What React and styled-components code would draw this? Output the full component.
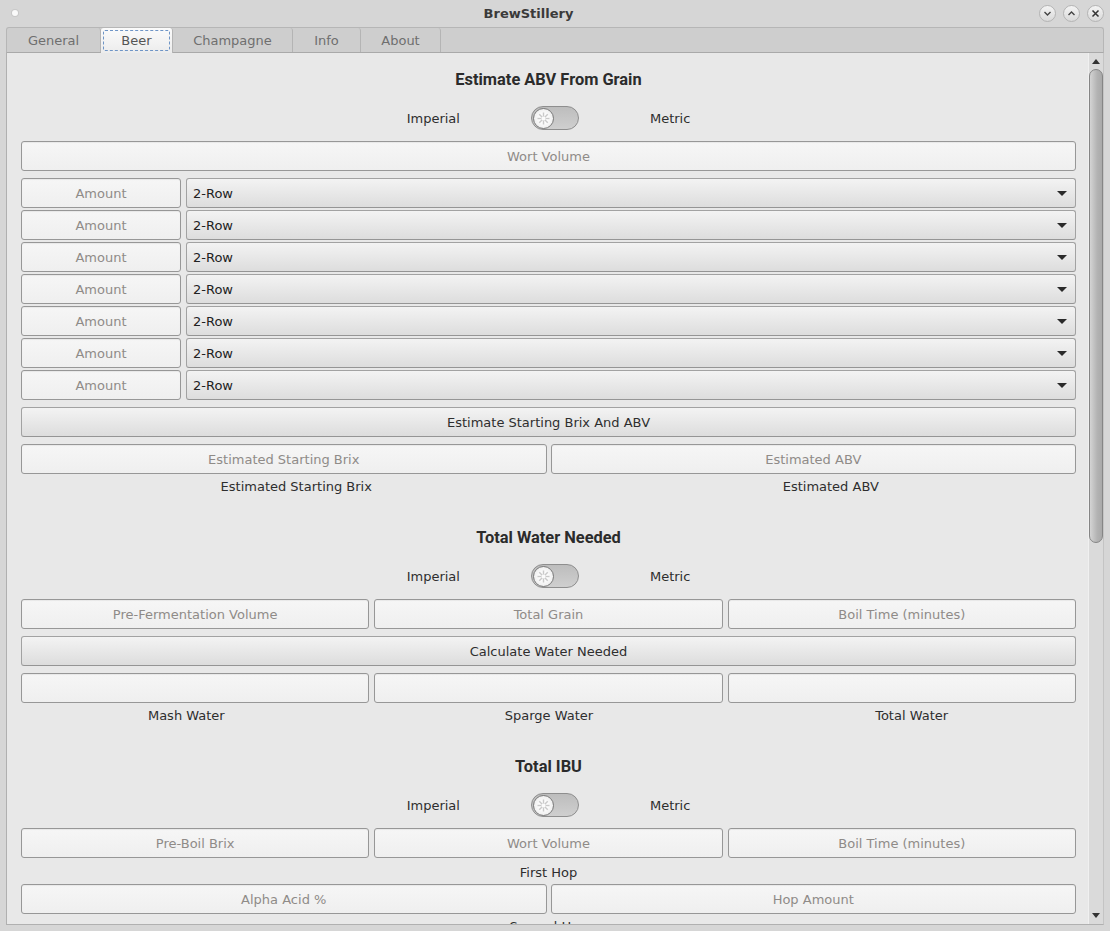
import React from 'react';
import styled, { createGlobalStyle } from 'styled-components';

const GlobalStyle = createGlobalStyle`
  html, body {
    margin: 0;
    padding: 0;
    background: #d6d6d6;
  }
  * { box-sizing: border-box; }
`;

const Window = styled.div`
  width: 1110px;
  height: 931px;
  display: flex;
  flex-direction: column;
  background: #d6d6d6;
  font-family: 'DejaVu Sans', 'Liberation Sans', sans-serif;
  font-size: 13px;
  color: #2e2e2e;
  overflow: hidden;
`;

const TitleBar = styled.div`
  height: 27px;
  flex: none;
  display: flex;
  align-items: center;
  padding: 0 6px 0 12px;
`;

const AppDot = styled.span`
  width: 6px;
  height: 6px;
  border-radius: 50%;
  background: #fafafa;
  box-shadow: 0 0 0 1px #c8c8c8;
  margin-top: -2px;
`;

const Title = styled.div`
  flex: 1;
  text-align: center;
  font-weight: bold;
  color: #3a3a3a;
  margin-top: -1px;
`;

const WinButtons = styled.div`
  display: flex;
  gap: 7px;
  margin-top: -1px;
`;

const WinButton = styled.span`
  width: 17px;
  height: 17px;
  border-radius: 50%;
  border: 1px solid #b4b4b4;
  background: linear-gradient(#f4f4f4, #d9d9d9);
  display: flex;
  align-items: center;
  justify-content: center;
`;

const Notebook = styled.div`
  flex: 1;
  display: flex;
  flex-direction: column;
  margin: 0 6px 6px 6px;
  min-height: 0;
`;

const TabBar = styled.div`
  height: 26px;
  flex: none;
  display: flex;
  background: #cecece;
  border: 1px solid #b6b6b6;
  border-bottom: 1px solid #a9a9a9;
  border-radius: 3px 3px 0 0;
`;

const Tab = styled.div`
  width: ${p => p.$w}px;
  display: flex;
  align-items: center;
  justify-content: center;
  color: ${p => (p.$active ? '#555' : '#6f6f6f')};
  border-right: 1px solid #b4b4b4;
  background: ${p => (p.$active ? 'linear-gradient(#fbfbfb, #ececec)' : 'transparent')};
  border-radius: 3px 3px 0 0;
  padding: 2px;
  margin-bottom: ${p => (p.$active ? '-1px' : '0')};
`;

const FocusRing = styled.span`
  flex: 1;
  align-self: stretch;
  display: flex;
  align-items: center;
  justify-content: center;
  border: 1px dashed #6f95c6;
  border-radius: 2px;
`;

const Pane = styled.div`
  flex: 1;
  display: flex;
  min-height: 0;
  background: #e8e8e8;
  border-left: 1px solid #b0b0b0;
  border-right: 1px solid #c4c4c4;
  border-bottom: 1px solid #b0b0b0;
`;

const Scroller = styled.div`
  flex: 1;
  overflow: hidden;
  padding: 16px 12px 0 14px;
  display: flex;
  flex-direction: column;
  & > * { flex: none; }
`;

const Heading = styled.h2`
  margin: ${p => p.$top || 0}px 0 0 0;
  font-family: Roboto, 'Liberation Sans', sans-serif;
  font-weight: bold;
  font-size: 16.4px;
  line-height: 20px;
  padding-top: 1px;
  text-align: center;
  color: #2b2b2b;
`;

const UnitRow = styled.div`
  height: 24px;
  margin-top: 16px;
  display: flex;
  align-items: center;
  justify-content: center;
  gap: 71px;
`;

const Track = styled.span`
  width: 48px;
  height: 24px;
  border-radius: 12px;
  border: 1px solid #8e8e8e;
  background: linear-gradient(#bdbdbd, #cfcfcf);
  display: flex;
  align-items: center;
  padding-left: 1px;
`;

const Knob = styled.span`
  width: 21px;
  height: 21px;
  border-radius: 50%;
  border: 1px solid #7a7a7a;
  background: radial-gradient(circle, #fdfdfd 30%, #e6e6e6 100%);
  display: flex;
  align-items: center;
  justify-content: center;
`;

const Field = styled.input`
  height: 30px;
  width: 100%;
  min-width: 0;
  margin-top: ${p => p.$top || 0}px;
  border: 1px solid #979797;
  border-radius: 3px;
  background: linear-gradient(#f6f6f6, #efefef);
  box-shadow: inset 0 1px 1px rgba(0, 0, 0, 0.06);
  font-family: 'DejaVu Sans', 'Liberation Sans', sans-serif;
  font-size: 13px;
  color: #2e2e2e;
  text-align: center;
  outline: none;
  padding: 0 6px;
  &::placeholder { color: #8f8b88; }
`;

const Button = styled.button`
  height: 30px;
  width: 100%;
  margin-top: 7px;
  border: 1px solid #a2a2a2;
  border-bottom-color: #959595;
  border-radius: 3px;
  background: linear-gradient(#f3f3f3, #dddddd);
  font-family: 'DejaVu Sans', 'Liberation Sans', sans-serif;
  font-size: 13px;
  color: #2e2e2e;
  padding: 0;
`;

const GrainList = styled.div`
  margin-top: 7px;
  display: flex;
  flex-direction: column;
  gap: 2px;
`;

const GrainRow = styled.div`
  display: grid;
  grid-template-columns: 160px 1fr;
  gap: 5px;
`;

const Combo = styled.div`
  height: 30px;
  border: 1px solid #a2a2a2;
  border-bottom-color: #959595;
  border-radius: 3px;
  background: linear-gradient(#f3f3f3, #dddddd);
  display: flex;
  align-items: center;
  justify-content: space-between;
  padding: 0 8px 0 6px;
  color: #222;
`;

const Arrow = styled.span`
  width: 0;
  height: 0;
  border-left: 5px solid transparent;
  border-right: 5px solid transparent;
  border-top: 5px solid #2a2a2a;
`;

const FieldRow = styled.div`
  display: grid;
  grid-template-columns: repeat(${p => p.$cols}, 1fr);
  gap: ${p => (p.$cols === 3 ? 5 : 4)}px;
  margin-top: ${p => p.$top || 0}px;
`;

const CaptionRow = styled.div`
  display: grid;
  grid-template-columns: repeat(${p => p.$cols}, 1fr);
  margin: 5px ${p => p.$right || 0}px 0 ${p => p.$left || 0}px;
  line-height: 16px;
`;

const Caption = styled.span`
  text-align: center;
  margin-top: ${p => p.$top || 0}px;
  line-height: 16px;
`;

const ScrollBar = styled.div`
  width: 15px;
  flex: none;
  background: #dadada;
  border-left: 1px solid #f0f0f0;
  display: flex;
  flex-direction: column;
  align-items: center;
  padding-top: 6px;
`;

const Thumb = styled.div`
  width: 14px;
  height: 474px;
  margin-top: 5px;
  border: 1px solid #858585;
  border-radius: 7px;
  background: linear-gradient(90deg, #d4d4d4, #b3b3b3 60%, #a9a9a9);
`;

const Spacer = styled.div`
  flex: 1;
`;

const ScrollArrow = styled.span`
  width: 0;
  height: 0;
  border-left: 4px solid transparent;
  border-right: 4px solid transparent;
  ${p => (p.$up ? 'border-bottom: 5px solid #333;' : 'border-top: 5px solid #333;')}
  margin-bottom: ${p => (p.$up ? 0 : 6)}px;
`;

const Chevron = ({ up }) => (
  <svg width="9" height="9" viewBox="0 0 9 9">
    <path d={up ? 'M1.5 6 L4.5 3 L7.5 6' : 'M1.5 3 L4.5 6 L7.5 3'} stroke="#444" strokeWidth="1.4" fill="none" />
  </svg>
);

const Cross = () => (
  <svg width="9" height="9" viewBox="0 0 9 9">
    <path d="M1.5 1.5 L7.5 7.5 M7.5 1.5 L1.5 7.5" stroke="#333" strokeWidth="1.5" />
  </svg>
);

const Spokes = () => (
  <svg width="15" height="15" viewBox="0 0 15 15">
    {[0, 45, 90, 135, 180, 225, 270, 315].map(a => (
      <line key={a} x1="7.5" y1="7.5" x2="7.5" y2="1.5" stroke="#c9c9c9" strokeWidth="1.4" transform={`rotate(${a} 7.5 7.5)`} />
    ))}
    <circle cx="7.5" cy="7.5" r="2" fill="#fbfbfb" />
  </svg>
);

const UnitToggle = () => (
  <UnitRow>
    <span>Imperial</span>
    <Track>
      <Knob>
        <Spokes />
      </Knob>
    </Track>
    <span>Metric</span>
  </UnitRow>
);

const tabs = [
  { name: 'General', w: 94 },
  { name: 'Beer', w: 72, active: true },
  { name: 'Champagne', w: 120 },
  { name: 'Info', w: 68 },
  { name: 'About', w: 80 },
];

const App = () => (
  <>
    <GlobalStyle />
    <Window>
      <TitleBar>
        <AppDot />
        <Title>BrewStillery</Title>
        <WinButtons>
          <WinButton><Chevron /></WinButton>
          <WinButton><Chevron up /></WinButton>
          <WinButton><Cross /></WinButton>
        </WinButtons>
      </TitleBar>
      <Notebook>
        <TabBar>
          {tabs.map(t => (
            <Tab key={t.name} $w={t.w} $active={t.active}>
              {t.active ? <FocusRing>{t.name}</FocusRing> : t.name}
            </Tab>
          ))}
        </TabBar>
        <Pane>
          <Scroller>
            <Heading>Estimate ABV From Grain</Heading>
            <UnitToggle />
            <Field $top={11} placeholder="Wort Volume" />
            <GrainList>
              {Array.from({ length: 7 }).map((_, i) => (
                <GrainRow key={i}>
                  <Field placeholder="Amount" />
                  <Combo>
                    <span>2-Row</span>
                    <Arrow />
                  </Combo>
                </GrainRow>
              ))}
            </GrainList>
            <Button>Estimate Starting Brix And ABV</Button>
            <FieldRow $cols={2} $top={7}>
              <Field placeholder="Estimated Starting Brix" />
              <Field placeholder="Estimated ABV" />
            </FieldRow>
            <CaptionRow $cols={2} $left={8} $right={-22}>
              <Caption>Estimated Starting Brix</Caption>
              <Caption>Estimated ABV</Caption>
            </CaptionRow>

            <Heading $top={32}>Total Water Needed</Heading>
            <UnitToggle />
            <FieldRow $cols={3} $top={11}>
              <Field placeholder="Pre-Fermentation Volume" />
              <Field placeholder="Total Grain" />
              <Field placeholder="Boil Time (minutes)" />
            </FieldRow>
            <Button>Calculate Water Needed</Button>
            <FieldRow $cols={3} $top={7}>
              <Field />
              <Field />
              <Field />
            </FieldRow>
            <CaptionRow $cols={3} $left={-16} $right={-17}>
              <Caption>Mash Water</Caption>
              <Caption>Sparge Water</Caption>
              <Caption>Total Water</Caption>
            </CaptionRow>

            <Heading $top={32}>Total IBU</Heading>
            <UnitToggle />
            <FieldRow $cols={3} $top={11}>
              <Field placeholder="Pre-Boil Brix" />
              <Field placeholder="Wort Volume" />
              <Field placeholder="Boil Time (minutes)" />
            </FieldRow>
            <Caption $top={7}>First Hop</Caption>
            <FieldRow $cols={2} $top={3}>
              <Field placeholder="Alpha Acid %" />
              <Field placeholder="Hop Amount" />
            </FieldRow>
            <Caption $top={5}>Second Hop</Caption>
            <FieldRow $cols={2} $top={3}>
              <Field placeholder="Alpha Acid %" />
              <Field placeholder="Hop Amount" />
            </FieldRow>
          </Scroller>
          <ScrollBar>
            <ScrollArrow $up />
            <Thumb />
            <Spacer />
            <ScrollArrow />
          </ScrollBar>
        </Pane>
      </Notebook>
    </Window>
  </>
);

export default App;
